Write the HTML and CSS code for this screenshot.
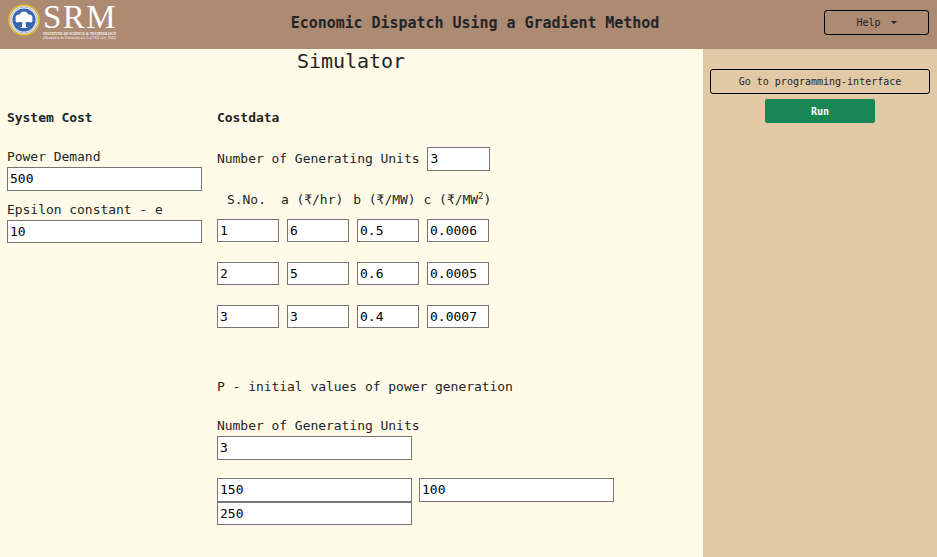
FILE: index.html
```html
<!DOCTYPE html>
<html lang="en">
<head>
  <meta charset="UTF-8" />
  <title>Economic Dispatch Using a Gradient Method</title>
  <link rel="stylesheet" href="styles.css">
</head>
<body>

  <!-- Top bar -->
  <div class="top-bar">
    <div class="logo">
      <svg class="emblem" width="32" height="32" viewBox="0 0 32 32">
        <circle cx="16" cy="16" r="15" fill="#f1f4f6" stroke="#d8b535" stroke-width="2" />
        <circle cx="16" cy="16" r="11.500" fill="#3a64ad" />
        <circle cx="16" cy="16" r="13" fill="none" stroke="#9db4d6" stroke-width="1" />
        <g fill="#fff">
          <circle cx="11" cy="14" r="3.500" />
          <circle cx="16" cy="12" r="4.500" />
          <circle cx="21" cy="14" r="3.500" />
          <circle cx="9.500" cy="16.500" r="2" />
          <circle cx="22.500" cy="16.500" r="2" />
          <ellipse cx="16" cy="16" rx="6" ry="2.500" />
          <path d="M14.500 16 L17.500 16 L18 23 L20 24 L12 24 L14 23 Z" />
        </g>
      </svg>
      <div class="wordmark">
        <div class="srm">SRM</div>
        <div class="inst">INSTITUTE OF SCIENCE &amp; TECHNOLOGY</div>
        <div class="deemed">(Deemed to be University u/s 3 of UGC Act, 1956)</div>
      </div>
    </div>
    <h1>Economic Dispatch Using a Gradient Method</h1>
    <button class="btn-outline help">Help <span class="caret"></span></button>
  </div>

  <div class="page">
    <div class="main">
      <h2>Simulator</h2>

      <div class="columns">
        <div class="system-cost">
          <h3>System Cost</h3>
          <label>Power Demand</label>
          <input type="text" value="500" class="wide" />
          <label class="second">Epsilon constant - e</label>
          <input type="text" value="10" class="wide" />
        </div>

        <div class="costdata">
          <h3>Costdata</h3>
          <div class="units-row">
            <label>Number of Generating Units</label>
            <input type="text" value="3" class="small" />
          </div>

          <div class="cost-head">
            <span class="sno">S.No.</span>
            <span class="col-a">a (₹/hr)</span>
            <span>b (₹/MW)</span>
            <span>c (₹/MW<sup>2</sup>)</span>
          </div>
          <div class="cost-grid">
            <input type="text" value="1" />
            <input type="text" value="6" />
            <input type="text" value="0.5" />
            <input type="text" value="0.0006" />
          </div>
          <div class="cost-grid">
            <input type="text" value="2" />
            <input type="text" value="5" />
            <input type="text" value="0.6" />
            <input type="text" value="0.0005" />
          </div>
          <div class="cost-grid">
            <input type="text" value="3" />
            <input type="text" value="3" />
            <input type="text" value="0.4" />
            <input type="text" value="0.0007" />
          </div>

          <p class="p-title">P - initial values of power generation</p>
          <label>Number of Generating Units</label>
          <input type="text" value="3" class="wide" />

          <div class="p-values">
            <input type="text" value="150" class="wide" />
            <input type="text" value="100" class="wide" />
            <input type="text" value="250" class="wide" />
          </div>
        </div>
      </div>
    </div>

    <!-- Right side -->
    <div class="sidebar">
      <button class="btn-outline go">Go to programming-interface</button>
      <button class="run">Run</button>
    </div>
  </div>

</body>
</html>
```

FILE: styles.css
```css
body {
  margin: 0;
  font-family: 'DejaVu Sans Mono', 'Liberation Mono', monospace;
  font-size: 13px;
  letter-spacing: -0.04px;
  color: #212529;
  background-color: #fffbe8;
}

.top-bar {
  height: 49px;
  background-color: #ad8a72;
  display: flex;
  align-items: center;
}

.logo {
  display: flex;
  align-items: flex-start;
  align-self: flex-start;
  padding-top: 4px;
  margin-left: 8px;
  width: 280px;
}

.emblem {
  flex: none;
}

.wordmark {
  margin-left: 3px;
  color: #fff;
  font-family: 'Liberation Serif', serif;
  width: 75px;
}

.srm {
  font-size: 33px;
  line-height: 27px;
  letter-spacing: 1.5px;
}

.inst {
  margin-top: 1px;
  font-size: 3.600px;
  line-height: 4.200px;
  letter-spacing: 0;
  font-weight: bold;
  white-space: nowrap;
}

.deemed {
  font-size: 3.600px;
  line-height: 4.200px;
  letter-spacing: 0;
  font-style: italic;
  white-space: nowrap;
}

h1 {
  margin: -4px 0 0 -13px;
  width: 400px;
  text-align: center;
  font-size: 15px;
  font-weight: bold;
  white-space: nowrap;
}

.btn-outline {
  background: transparent;
  border: 1px solid #000;
  border-radius: 3px;
  font-family: inherit;
  font-size: 10px;
  color: #212529;
}

.help {
  width: 105px;
  height: 25px;
  margin-left: auto;
  margin-right: 8px;
  margin-top: -4px;
}

.caret {
  display: inline-block;
  margin-left: 4px;
  vertical-align: 2px;
  border-top: 3px solid #212529;
  border-left: 3px solid transparent;
  border-right: 3px solid transparent;
}

.page {
  display: flex;
  height: 508px;
}

.main {
  width: 703px;
  flex: none;
}

h2 {
  margin: 0;
  padding: 1px 1px 0 0;
  text-align: center;
  font-size: 20px;
  font-weight: normal;
  line-height: 23px;
}

.columns {
  display: flex;
  margin-top: 36px;
  padding-left: 7px;
}

h3 {
  margin: 0 0 22px;
  font-size: 13px;
  font-weight: bold;
  line-height: 17px;
}

label {
  display: block;
  line-height: 17px;
}

input {
  box-sizing: border-box;
  height: 23.500px;
  padding: 1px 2px;
  border: 1px solid #767676;
  border-radius: 0;
  background: #fff;
  font-family: inherit;
  font-size: 13px;
  color: #000;
}

.wide {
  display: block;
  width: 195px;
}

.system-cost {
  width: 210px;
}

.system-cost label {
  margin-bottom: 2px;
}

.system-cost label.second {
  margin-top: 10px;
}

.units-row {
  display: flex;
  align-items: center;
  gap: 8px;
  margin-top: -1px;
}

.small {
  width: 63px;
}

.cost-head {
  display: flex;
  gap: 8px;
  margin: 20px 0 11px;
  padding-left: 10px;
  line-height: 17px;
  white-space: nowrap;
}

.cost-head .sno {
  margin-right: 7px;
}

.cost-head .col-a {
  margin-right: 2px;
}

.cost-head sup {
  font-size: 9px;
  line-height: 0;
}

.cost-grid {
  display: grid;
  grid-template-columns: repeat(4, 62px);
  column-gap: 8px;
  margin-bottom: 19.500px;
}

.cost-grid input {
  width: 100%;
}

.p-title {
  margin: 50px 0 22px;
  line-height: 17px;
}

.costdata label + .wide {
  margin-top: 2px;
}

.p-values {
  display: flex;
  flex-wrap: wrap;
  column-gap: 7px;
  width: 400px;
  margin-top: 18.500px;
}

.sidebar {
  flex: 1;
  background-color: #e2c9a6;
  display: flex;
  flex-direction: column;
  align-items: center;
  padding-top: 20px;
}

.go {
  width: 220px;
  height: 25px;
}

.run {
  width: 110px;
  height: 24px;
  margin-top: 5px;
  background-color: #198754;
  border: none;
  border-radius: 2px;
  color: #fff;
  font-family: inherit;
  font-size: 10px;
  font-weight: bold;
}
```
